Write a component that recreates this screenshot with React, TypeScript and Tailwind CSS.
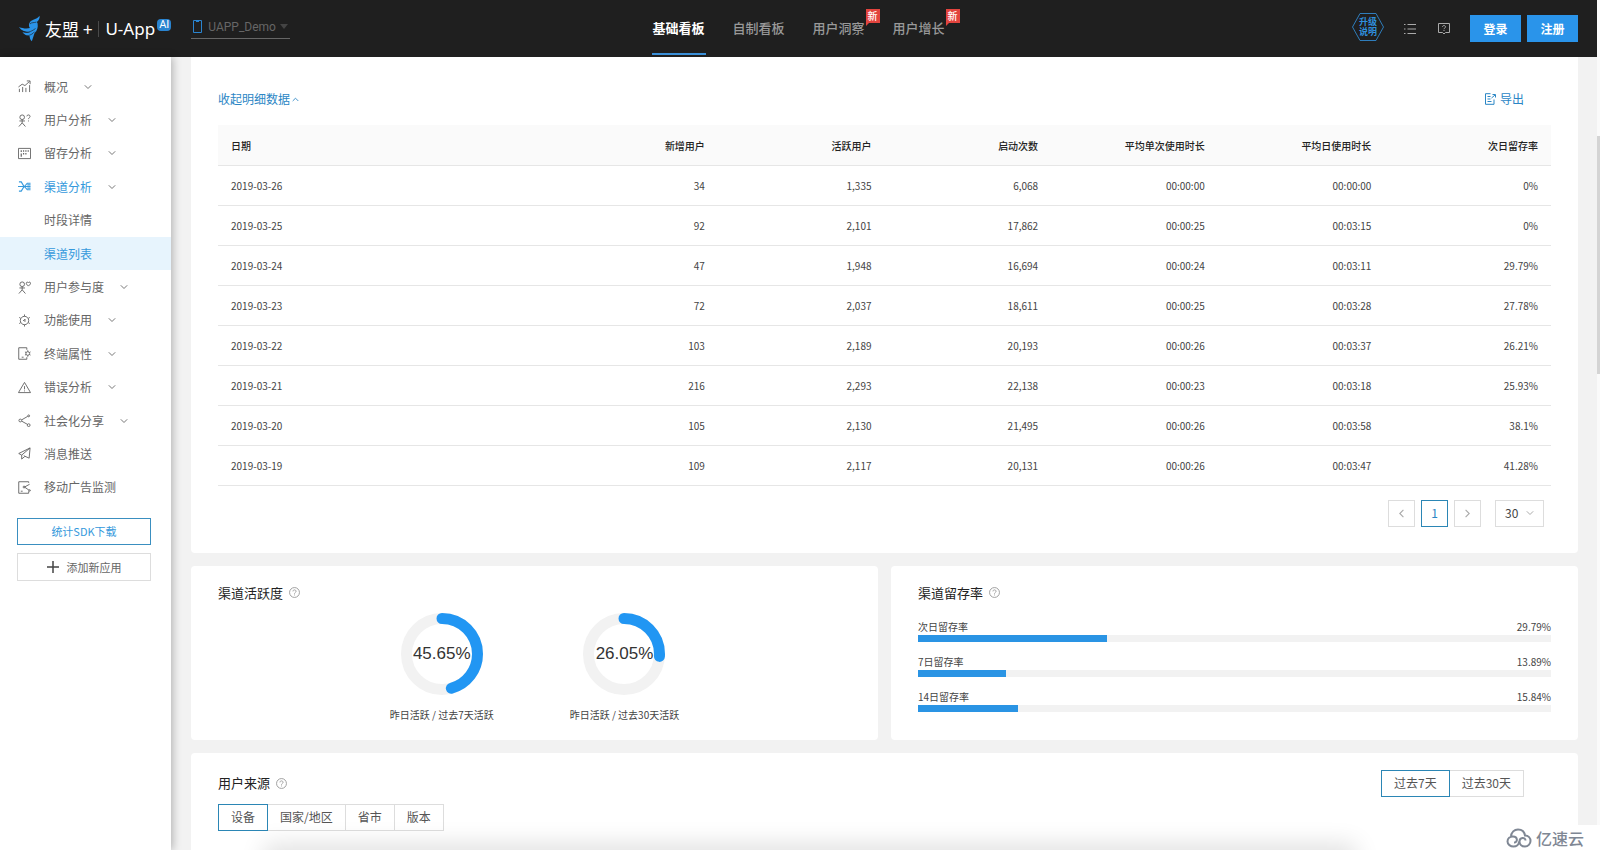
import { useState } from 'react'
import type { ReactNode } from 'react'
import clsx from 'clsx'

interface MenuItem {
  label: string
  icon?: string
  arrow?: boolean
}

const menu: MenuItem[] = [
  { label: '概况', icon: 'overview', arrow: true },
  { label: '用户分析', icon: 'user', arrow: true },
  { label: '留存分析', icon: 'retention', arrow: true },
  { label: '渠道分析', icon: 'channel', arrow: true },
  { label: '时段详情' },
  { label: '渠道列表' },
  { label: '用户参与度', icon: 'engage', arrow: true },
  { label: '功能使用', icon: 'gear', arrow: true },
  { label: '终端属性', icon: 'device', arrow: true },
  { label: '错误分析', icon: 'warning', arrow: true },
  { label: '社会化分享', icon: 'share', arrow: true },
  { label: '消息推送', icon: 'push' },
  { label: '移动广告监测', icon: 'ads' },
]

const icons: Record<string, ReactNode> = {
  overview: <path d="M1.5 13V9.5M5 13V7.5M8.5 13V8.5M12.5 13V5.5M.5 7.5 4.5 4.5l3 1.500 5-4.500M9.500 1h3.500v3.500" />,
  user: (
    <>
      <circle cx="4.500" cy="3.500" r="2.500" />
      <path d="M1.500 7.500h6M4.500 6v3.500M1 13.500l3.500-4 3.500 4M9.500 2.500c0-2 3.500-2 3.500 0 0 1.500-1.700 1.500-1.700 3M11.300 7v1" />
    </>
  ),
  retention: (
    <>
      <path d="M.5 1.500h13v11H.5z" />
      <path strokeWidth="1.300" d="M3.500 3.500v2M3.500 7v3.500M6 3.500v1.500M6 6.500v1.500M8.500 3.500v1.500M8.500 6.500v1.500M11 3.500v1.500" />
    </>
  ),
  channel: (
    <path strokeWidth="1.200" d="M1 2h2.500l3 5-3 5H1M0 7h13.500M13.500 3.500H10L7 7l3 3.500h3.500M10 5.300h3.500M10 8.700h3.500" />
  ),
  engage: (
    <>
      <circle cx="4.500" cy="3.500" r="2.500" />
      <path d="M1.500 7.500h6M4.500 6v3.500M1 13.500l3.500-4 3.500 4M11.200 5.500 9 3.200C8.500 1 10.500.5 11.200 2c.7-1.500 2.700-1 2.200 1.200z" />
    </>
  ),
  gear: (
    <>
      <circle cx="7" cy="7" r="4.500" />
      <path d="M7 .5v2M7 11.500v2M1.300 3.700 3 4.700M11 9.300l1.700 1M1.300 10.300 3 9.300M11 4.700l1.700-1M5.500 7h1l1-1.500v3" />
    </>
  ),
  device: (
    <>
      <path d="M9.500 3V.8H.8v12.400h8.700V11M4 11h2" />
      <circle cx="10.500" cy="7" r="2" />
      <path d="M10.500 3.500V5M10.500 9v1.500M7.500 5.300l1.300.7M7.500 8.700 8.800 8M13.500 5.300l-1.300.7M13.500 8.700 12.200 8" />
    </>
  ),
  warning: <path d="M7 1.500 13.500 12.500H.5zM7 5.500v3.500M7 10.200v1" />,
  share: (
    <>
      <circle cx="2.500" cy="7" r="1.500" />
      <circle cx="11.500" cy="2" r="1" />
      <circle cx="11.500" cy="12" r="1.500" />
      <path d="M4 6.300 10.500 2.500M4 7.700l6.200 3.500" />
    </>
  ),
  push: <path d="M13 1 .8 7 4 8.700 13 1l-1 11-4.500-2M4 8.700V13l3.500-3-1-1" />,
  ads: (
    <>
      <path d="M11.500 2V.8H.8v12.400h10.700V11M3 11h2" />
      <path d="m7 6.500 5.500-3M7 6.500l5 3.500" />
      <circle cx="6.500" cy="6.500" r="1" />
      <circle cx="12.500" cy="10.200" r=".8" />
    </>
  ),
}

const columns = ['日期', '新增用户', '活跃用户', '启动次数', '平均单次使用时长', '平均日使用时长', '次日留存率']

const rows = [
  ['2019-03-26', '34', '1,335', '6,068', '00:00:00', '00:00:00', '0%'],
  ['2019-03-25', '92', '2,101', '17,862', '00:00:25', '00:03:15', '0%'],
  ['2019-03-24', '47', '1,948', '16,694', '00:00:24', '00:03:11', '29.79%'],
  ['2019-03-23', '72', '2,037', '18,611', '00:00:25', '00:03:28', '27.78%'],
  ['2019-03-22', '103', '2,189', '20,193', '00:00:26', '00:03:37', '26.21%'],
  ['2019-03-21', '216', '2,293', '22,138', '00:00:23', '00:03:18', '25.93%'],
  ['2019-03-20', '105', '2,130', '21,495', '00:00:26', '00:03:58', '38.1%'],
  ['2019-03-19', '109', '2,117', '20,131', '00:00:26', '00:03:47', '41.28%'],
]

const retention = [
  { label: '次日留存率', value: 29.79 },
  { label: '7日留存率', value: 13.89 },
  { label: '14日留存率', value: 15.84 },
]

function Icon({ name }: { name: string }) {
  return (
    <svg viewBox="0 0 14 14" className="size-[13px] shrink-0" fill="none" stroke="currentColor" strokeWidth="1" aria-hidden="true">
      {icons[name]}
    </svg>
  )
}

function Chevron({ className }: { className?: string }) {
  return (
    <svg viewBox="0 0 8 8" className={clsx('shrink-0', className)} fill="none" stroke="currentColor" aria-hidden="true">
      <path d="m.8 2.300 3.200 3.200 3.200-3.200" />
    </svg>
  )
}

function Help() {
  return (
    <svg viewBox="0 0 12 12" className="size-[11px] text-[#999]" fill="none" stroke="currentColor" aria-hidden="true">
      <circle cx="6" cy="6" r="5.400" />
      <path d="M4.300 4.800c0-2.200 3.400-2.200 3.400 0C7.700 6 6 6 6 7.300M6 8.200v1" />
    </svg>
  )
}

function Title({ children }: { children: ReactNode }) {
  return (
    <div className="flex items-center gap-[6px]">
      <h2 className="text-[13px] leading-5 text-[#222]">{children}</h2>
      <Help />
    </div>
  )
}

function Logo() {
  return (
    <a href="#" className="flex items-center text-white">
      <svg viewBox="0 0 24 28" className="mr-1 h-[27px] w-[22px]" aria-hidden="true">
        <path fill="#2a94ea" d="M22.500 0c.3 3-1 5.200-3 7l.8 1.500c.7 4-.5 8-3.300 10.500L14 28c-1.500-1.500-2.500-3.500-2.300-5.500C8 22 5 20.300 3.800 17.800c3 1 6.200 1 8.700.2C7.500 18 2.500 16.500 0 12.300c4 1.700 8.500 2 12 1.200C10 11 11 7 13.500 5.500 15 4.300 20 3.500 22.500 0z" />
        <path stroke="#1f1f1f" strokeWidth=".7" fill="none" d="M3 17c5 2 10 1 15-3M8 22c4-.2 7-2 9-4.500M12 9c2-2 4-1 7-2" />
      </svg>
      <span className="text-[17px]">友盟</span>
      <span className="ml-1 text-[17px]">+</span>
      <span className="mx-[6px] h-4 w-px bg-[#4a4a4a]" />
      <span className="font-['Noto_Sans'] text-[17px]">U-App</span>
      <span className="mb-2 ml-[2px] rounded-sm bg-[#2a84d0] px-[2px] font-['Roboto'] text-[11px] leading-3">AI</span>
    </a>
  )
}

function Header() {
  const tabs = [
    { label: '基础看板', active: true },
    { label: '自制看板' },
    { label: '用户洞察', fresh: true },
    { label: '用户增长', fresh: true },
  ]
  return (
    <header className="flex h-[57px] shrink-0 items-center bg-[#1f1f1f] pr-[19px] pl-[19px]">
      <div className="flex flex-1 items-center gap-5">
        <Logo />
        <label className="flex items-center gap-[6px] border-b border-[#666] px-[2px] pb-[3px] text-[#666]">
          <svg viewBox="0 0 9 13" className="h-[13px] w-[9px]" fill="none" stroke="#2a84d0" aria-hidden="true">
            <path d="M.5.5h8v12h-8zM3 1.500h3" />
          </svg>
          <select aria-label="应用" className="w-[70px] appearance-none bg-transparent font-['Roboto'] text-[12px] leading-4">
            <option>UAPP_Demo</option>
          </select>
          <svg viewBox="0 0 8 5" className="-ml-1 h-[5px] w-2" fill="#444" aria-hidden="true">
            <path d="M0 0h8L4 5z" />
          </svg>
        </label>
      </div>
      <nav className="flex h-full gap-[26px]">
        {tabs.map((t) => (
          <a
            key={t.label}
            href="#"
            className={clsx(
              'relative mb-[2px] w-[54px] border-b-2 text-center text-[13px] leading-[55px] whitespace-nowrap',
              t.active ? 'border-[#3a8fd8] font-bold text-white' : 'border-transparent font-medium text-[#999]',
            )}
          >
            {t.label}
            {t.fresh && (
              <span className="absolute top-[9px] -right-[14px] bg-[#e2443e] px-[2px] text-[10px] leading-[14px] text-white">
                新
                <svg viewBox="0 0 4 4" className="absolute -bottom-[3px] left-0 size-1" fill="#e2443e" aria-hidden="true">
                  <path d="M0 0h4L0 4z" />
                </svg>
              </span>
            )}
          </a>
        ))}
      </nav>
      <div className="flex flex-1 items-center justify-end">
        <a href="#" className="relative mb-1 flex h-7 w-8 items-center justify-center text-center text-[9px] leading-[10px] font-bold text-[#2f8fdd]">
          <svg viewBox="0 0 32 28" className="absolute inset-0" fill="none" stroke="#2f7dbb" aria-hidden="true">
            <path d="M8 .5h16L31.500 14 24 27.500H8L.5 14z" />
          </svg>
          升级
          <br />
          说明
        </a>
        <button type="button" aria-label="列表" className="ml-5 text-[#aaa]">
          <svg viewBox="0 0 12 12" className="size-3" fill="none" stroke="currentColor">
            <path d="M0 1.500h1.500M3.500 1.500H12M0 6h1.500M3.500 6H12M0 10.500h1.500M3.500 10.500H12" />
          </svg>
        </button>
        <button type="button" aria-label="帮助" className="mr-5 ml-[22px] text-[#aaa]">
          <svg viewBox="0 0 12 12" className="size-3" fill="none" stroke="currentColor">
            <path d="M.5.500h11v9H7.500L6 11 4.500 9.500h-4zM4.500 4c0-2 3-2 3 0C7.500 5 6 5 6 6.200M6 7v1" />
          </svg>
        </button>
        <div className="flex gap-[6px] text-[12px] font-bold text-white">
          <button type="button" className="h-[27px] w-[51px] bg-[#2a94ea]">登录</button>
          <button type="button" className="h-[27px] w-[51px] bg-[#2a94ea]">注册</button>
        </div>
      </div>
    </header>
  )
}

function Sidebar() {
  return (
    <aside className="z-10 w-[171px] shrink-0 bg-white pt-[13px] shadow-[2px_0_8px_rgba(0,0,0,0.25)]">
      <nav className="flex h-[434px] flex-col">
        {menu.map((m) => (
          <a
            key={m.label}
            href="#"
            className={clsx(
              'flex flex-1 items-center pl-[18px] text-[12px]',
              m.label === '渠道分析' || m.label === '渠道列表' ? 'text-[#3599dc]' : 'text-[#666]',
              m.label === '渠道列表' && 'bg-[#e7f4fd]',
            )}
          >
            <span className="flex w-[26px] shrink-0">{m.icon && <Icon name={m.icon} />}</span>
            {m.label}
            {m.arrow && <Chevron className="ml-4 size-2 text-[#777]" />}
          </a>
        ))}
      </nav>
      <div className="mt-[14px] flex flex-col gap-2 pr-5 pl-[17px] text-[11px]">
        <button type="button" className="h-[27px] border border-[#3a8fc0] text-[#3599dc]">统计SDK下载</button>
        <button type="button" className="flex h-7 items-center justify-center gap-2 border border-[#ddd] text-[#666]">
          <svg viewBox="0 0 12 12" className="size-3" fill="none" stroke="#444" strokeWidth="1.500" aria-hidden="true">
            <path d="M6 0v12M0 6h12" />
          </svg>
          添加新应用
        </button>
      </div>
    </aside>
  )
}

function DetailCard() {
  const [size, setSize] = useState('30')
  return (
    <section className="rounded-b-sm bg-white px-[27px] pt-8 pb-[26px]">
      <div className="flex items-center justify-between pr-[27px] text-[12px] leading-5 text-[#2b86c5]">
        <button type="button" className="flex items-center gap-[2px]">
          收起明细数据
          <Chevron className="size-[7px] rotate-180" />
        </button>
        <button type="button" className="flex items-center gap-1">
          <svg viewBox="0 0 12 12" className="size-3" fill="none" stroke="currentColor" aria-hidden="true">
            <path d="M6.500.7h-5v10.600h8.500V6.500M3.500 3.500h3M3.500 6h3M3.500 8.500h4M7.500 5l3.500-3M8.500 1.500h3v3" />
          </svg>
          导出
        </button>
      </div>
      <table className="mt-4 w-full table-fixed text-[10px] text-[#444]">
        <thead>
          <tr className="h-10 border-b border-[#e6e6e6] bg-[#fafafa] text-[#222]">
            {columns.map((c, i) => (
              <th key={c} scope="col" className={clsx('px-[13px] pt-px font-medium', i === 0 ? 'w-1/4 text-left' : 'text-right')}>
                {c}
              </th>
            ))}
          </tr>
        </thead>
        <tbody>
          {rows.map((r) => (
            <tr key={r[0]} className="h-10 border-b border-[#e6e6e6]">
              {r.map((cell, i) => (
                <td key={i} className={clsx('px-[13px] pt-px', i === 0 ? 'text-left' : 'text-right')}>
                  {cell}
                </td>
              ))}
            </tr>
          ))}
        </tbody>
      </table>
      <div className="mt-[14px] flex justify-end gap-[6px] pr-[7px] text-[12px]">
        <button type="button" aria-label="上一页" className="flex size-[27px] items-center justify-center border border-[#ddd] text-[#aaa]">
          <Chevron className="size-[9px] rotate-90" />
        </button>
        <button type="button" className="size-[27px] border border-[#2b86b5] text-[#2b86c5]">1</button>
        <button type="button" aria-label="下一页" className="flex size-[27px] items-center justify-center border border-[#ddd] text-[#aaa]">
          <Chevron className="size-[9px] -rotate-90" />
        </button>
        <label className="relative ml-2 flex items-center">
          <select
            aria-label="每页条数"
            value={size}
            onChange={(e) => setSize(e.target.value)}
            className="h-[27px] w-[49px] appearance-none border border-[#ddd] pl-[9px] text-[#444]"
          >
            <option>30</option>
            <option>50</option>
          </select>
          <Chevron className="pointer-events-none absolute right-[10px] size-2 text-[#aaa]" />
        </label>
      </div>
    </section>
  )
}

function Donut({ value, label }: { value: number; label: string }) {
  const length = 2 * Math.PI * 35.5
  return (
    <figure className="flex flex-col items-center gap-3">
      <div className="relative size-[82px]">
        <svg viewBox="0 0 82 82" fill="none" strokeWidth="11" aria-hidden="true">
          <circle cx="41" cy="41" r="35.500" stroke="#f2f2f2" />
          <circle
            cx="41"
            cy="41"
            r="35.500"
            stroke="#2196f3"
            strokeLinecap="round"
            strokeDasharray={`${(length * value) / 100} ${length}`}
            transform="rotate(-90 41 41)"
          />
        </svg>
        <span className="absolute inset-0 flex items-center justify-center font-['Liberation_Sans'] text-[17px] text-[#333]">
          {value}%
        </span>
      </div>
      <figcaption className="text-[10px] leading-4 text-[#444]">{label}</figcaption>
    </figure>
  )
}

function Segmented({ items, className }: { items: string[]; className?: string }) {
  const [active, setActive] = useState(items[0])
  return (
    <div className={clsx('flex text-[12px]', className)}>
      {items.map((item) => (
        <button
          key={item}
          type="button"
          onClick={() => setActive(item)}
          className={clsx(
            '-mr-px h-[27px] border px-3 text-[#555]',
            item === active ? 'relative border-[#2b86b5]' : 'border-[#ddd]',
          )}
        >
          {item}
        </button>
      ))}
    </div>
  )
}

export default function App() {
  return (
    <div className="relative flex h-screen overflow-hidden bg-[#f2f2f2] font-['Noto_Sans_CJK_SC',sans-serif]">
      <div className="flex min-w-0 flex-1 flex-col">
        <Header />
        <div className="flex min-h-0 flex-1">
          <Sidebar />
          <main className="flex min-w-0 flex-1 flex-col gap-[13px] pr-[19px] pl-5">
            <DetailCard />
            <div className="grid grid-cols-2 gap-[13px]">
              <section className="rounded-sm bg-white px-[27px] py-[17px]">
                <Title>渠道活跃度</Title>
                <div className="mt-[10px] flex justify-center gap-[76px]">
                  <Donut value={45.65} label="昨日活跃 / 过去7天活跃" />
                  <Donut value={26.05} label="昨日活跃 / 过去30天活跃" />
                </div>
              </section>
              <section className="rounded-sm bg-white px-[27px] py-[17px]">
                <Title>渠道留存率</Title>
                <ul className="mt-4 flex flex-col gap-3 text-[10px] leading-4 text-[#444]">
                  {retention.map((r) => (
                    <li key={r.label}>
                      <div className="flex justify-between">
                        <span>{r.label}</span>
                        <span>{r.value}%</span>
                      </div>
                      <div className="h-[7px] bg-[#f2f2f2]">
                        <div className="h-full bg-[#2a94e4]" style={{ width: `${r.value}%` }} />
                      </div>
                    </li>
                  ))}
                </ul>
              </section>
            </div>
            <section className="flex-1 rounded-t-sm bg-white px-[27px] pt-[17px]">
              <div className="flex items-center justify-between pr-7">
                <Title>用户来源</Title>
                <Segmented items={['过去7天', '过去30天']} />
              </div>
              <Segmented items={['设备', '国家/地区', '省市', '版本']} className="mt-[7px]" />
            </section>
          </main>
        </div>
      </div>
      <div className="w-[3px] bg-[#fafafa] pt-[136px]">
        <div className="h-[238px] bg-[#d4d4d4]" />
      </div>
      <div className="absolute top-full right-[250px] left-[270px] z-20 h-5 shadow-[0_0_24px_6px_rgba(0,0,0,0.12)]" />
      <div className="absolute right-0 bottom-0 z-20 flex h-[25px] items-center gap-1 bg-white pr-4 pl-2 text-[16px] font-medium text-[#7f8794]">
        <svg viewBox="0 0 26 20" className="h-5 w-[26px]" fill="none" stroke="currentColor" strokeWidth="2" aria-hidden="true">
          <path d="M5 9C5 4 8.500 1.500 12 1.500c4 0 6.500 2.500 7 6 3.500 0 5.500 2.500 5.500 5.500s-2.500 5.500-5.500 5.500c-3.500 0-5.500-2.500-5.500-5 0-4.500 6-4.500 6-1M13 13.500c0 3-2.500 5-5.500 5s-6-2-6-5 2.500-5 5.500-5c5 0 5 6 1 6" />
        </svg>
        亿速云
      </div>
    </div>
  )
}
